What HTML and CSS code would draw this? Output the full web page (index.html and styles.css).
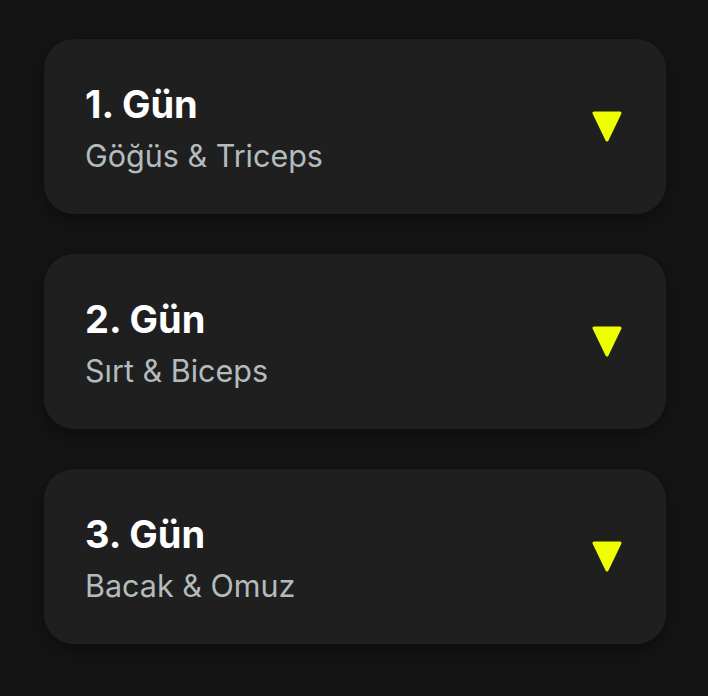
FILE: index.html
```html
<!DOCTYPE html>
<html lang="tr">
<head>
    <meta charset="UTF-8">
    <meta name="viewport" content="width=device-width, initial-scale=1.0">
    <title>Antrenman Programı</title>
    <link rel="stylesheet" href="styles.css">
</head>
<body>
    <main class="days">
        <div class="day-card">
            <div class="day-info">
                <h2 class="day-title">1. Gün</h2>
                <p class="day-subtitle">Göğüs &amp; Triceps</p>
            </div>
            <svg class="day-toggle" viewBox="0 0 30 31"><polygon points="2,2 28,2 15,29" /></svg>
        </div>

        <div class="day-card">
            <div class="day-info">
                <h2 class="day-title">2. Gün</h2>
                <p class="day-subtitle">Sırt &amp; Biceps</p>
            </div>
            <svg class="day-toggle" viewBox="0 0 30 31"><polygon points="2,2 28,2 15,29" /></svg>
        </div>

        <div class="day-card">
            <div class="day-info">
                <h2 class="day-title">3. Gün</h2>
                <p class="day-subtitle">Bacak &amp; Omuz</p>
            </div>
            <svg class="day-toggle" viewBox="0 0 30 31"><polygon points="2,2 28,2 15,29" /></svg>
        </div>
    </main>
</body>
</html>
```

FILE: styles.css
```css
/* General Styles */
body {
    margin: 0;
    padding: 0;
    background: #141414;
    font-family: Inter, "Noto Sans", sans-serif;
    min-height: 100vh;
}

.days {
    display: flex;
    flex-direction: column;
    gap: 40px;
    padding: 39px 42px 0 44px;
}

/* Day cards */
.day-card {
    display: flex;
    align-items: center;
    justify-content: space-between;
    height: 175px;
    box-sizing: border-box;
    padding: 0 44px 0 41px;
    background: #1f1f1f;
    border-radius: 30px;
    box-shadow: 0 6px 16px rgba(0, 0, 0, 0.35);
}

.day-info {
    padding-top: 4px;
}

.day-title {
    margin: 0;
    font-size: 38px;
    font-weight: 700;
    line-height: 1.2;
    color: #fff;
}

.day-subtitle {
    margin: 10px 0 0;
    font-size: 30.5px;
    line-height: 1.2;
    color: #b3bcbd;
}

.day-toggle {
    width: 30px;
    height: 31px;
    fill: #eeff00;
    stroke: #eeff00;
    stroke-width: 3;
    stroke-linejoin: round;
}
```
